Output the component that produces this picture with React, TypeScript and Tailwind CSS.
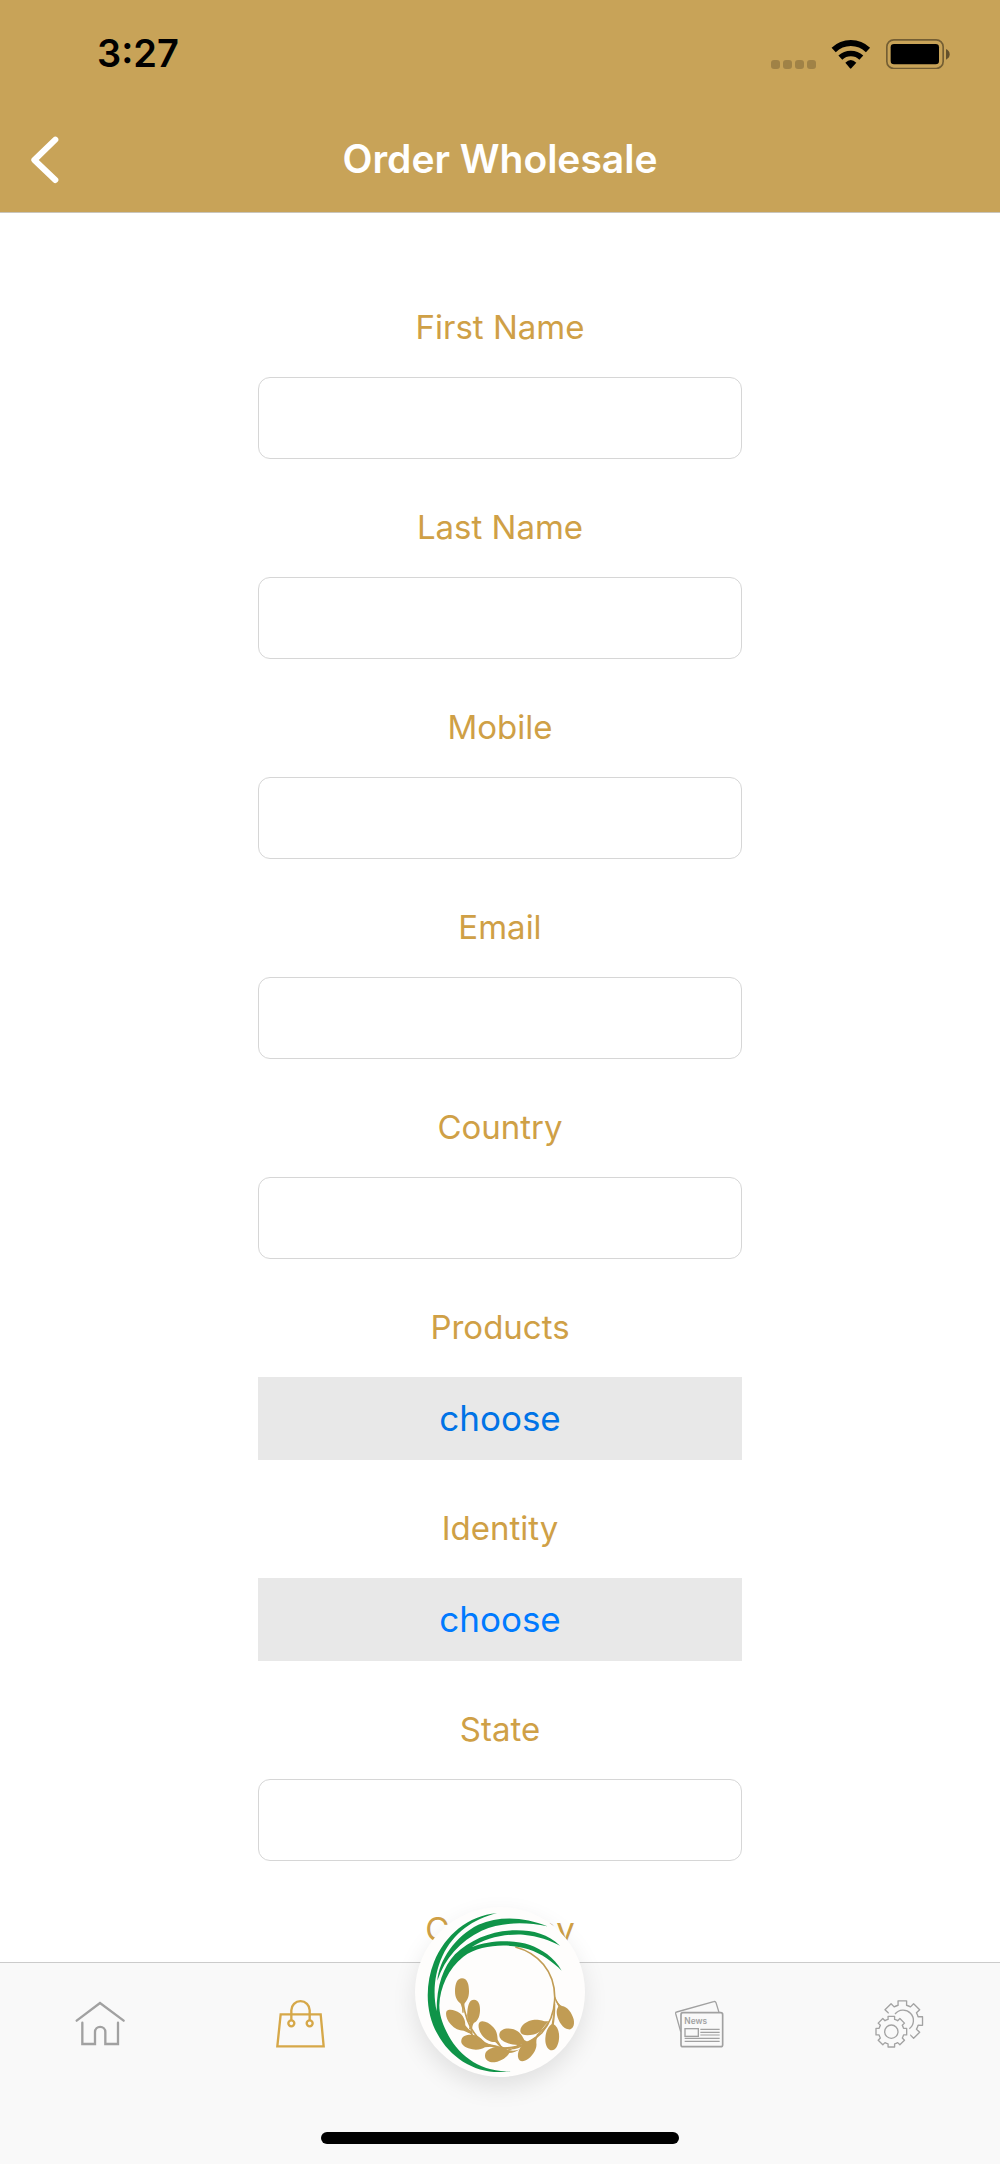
import React from 'react';

type Field = { id: string; label: string; kind: 'text' | 'choose'; type?: string };

const FIELDS: Field[] = [
    { id: 'first-name', label: 'First Name', kind: 'text' },
    { id: 'last-name', label: 'Last Name', kind: 'text' },
    { id: 'mobile', label: 'Mobile', kind: 'text', type: 'tel' },
    { id: 'email', label: 'Email', kind: 'text', type: 'email' },
    { id: 'country', label: 'Country', kind: 'text' },
    { id: 'products', label: 'Products', kind: 'choose' },
    { id: 'identity', label: 'Identity', kind: 'choose' },
    { id: 'state', label: 'State', kind: 'text' },
    { id: 'company', label: 'Company', kind: 'text' },
];

const polar = (cx: number, cy: number, r: number, deg: number) => {
    const a = (deg * Math.PI) / 180;
    return `${(cx + r * Math.cos(a)).toFixed(1)} ${(cy + r * Math.sin(a)).toFixed(1)}`;
};

// Teeth joined by arcs along the root circle
const gearPath = (cx: number, cy: number, outer: number, root: number, teeth: number[], from?: number, to?: number) => {
    let d = from === undefined ? '' : `M${polar(cx, cy, root, from)}`;
    teeth.forEach((t) => {
        d += d === '' ? `M${polar(cx, cy, root, t - 15)}` : `A${root} ${root} 0 0 1 ${polar(cx, cy, root, t - 15)}`;
        d += `L${polar(cx, cy, outer, t - 12)}L${polar(cx, cy, outer, t + 12)}L${polar(cx, cy, root, t + 15)}`;
    });
    return to === undefined ? `${d}A${root} ${root} 0 0 1 ${polar(cx, cy, root, teeth[0] - 15)}Z` : `${d}A${root} ${root} 0 0 1 ${polar(cx, cy, root, to)}`;
};

const HomeIcon = () => (
    <svg viewBox="0 0 150 150" className="size-[50px]" fill="none" stroke="#a1a1a1" strokeWidth="7" strokeLinecap="round">
        <path d="M5 65 75 12l71 53" />
        <path d="M22 71v64h38V99a15.500 15.500 0 0 1 31 0v36h38V71" />
    </svg>
);

const BagIcon = () => (
    <svg viewBox="0 0 150 150" className="size-[50px]" fill="none" stroke="#d6a849" strokeWidth="7">
        <path d="M17 46h120l9 96H7z" />
        <path d="M49 63V34a27.500 27.500 0 0 1 55 0v29" />
        <circle cx="49" cy="73" r="9" />
        <circle cx="104" cy="73" r="9" />
    </svg>
);

const NewsIcon = () => (
    <svg viewBox="0 0 150 150" className="size-[50px]" fill="none" stroke="#a1a1a1" strokeWidth="4">
        <path d="M17 98 2 44q-1-4 3-5L116 8q5-2 7 3l9 29" />
        <rect x="18" y="41" width="125" height="102" rx="6" strokeWidth="5" />
        <rect x="30" y="89" width="40" height="23" />
        <path d="M76 91h58M76 100h58M76 108h58M29 118h105M29 127h105" strokeWidth="3.500" />
        <text x="28" y="75" fontSize="25" fontWeight="600" fontFamily="Inter, sans-serif" fill="#a1a1a1" stroke="none">
            News
        </text>
    </svg>
);

const GearsIcon = () => (
    <svg viewBox="0 0 150 150" className="size-[50px]" fill="none" stroke="#a3a3a3" strokeWidth="4" strokeLinejoin="round">
        <path d={gearPath(49, 98, 47, 38, [-90, -45, 0, 45, 90, 135, 180, 225])} />
        <circle cx="49" cy="98" r="20" />
        <path d={gearPath(82, 66, 62, 49, [-135, -90, -45, 0, 45], -152, 61)} />
        <path d="M60 45A31 31 0 1 1 103 89" />
    </svg>
);

const WreathLogo = () => (
    <svg viewBox="45 80 510 510" className="size-full">
        <g fill="none" stroke="#c19c54" strokeWidth="4">
            <path d="M346 200C410 217 468 270 464 360C462 400 450 430 425 458C385 498 315 515 265 493C230 478 200 440 188 362" strokeWidth="5" />
            <path d="M464 350Q472 372 484 384M464 370Q464 410 458 440M445 428Q430 448 410 466M220 425Q208 450 218 468M190 440Q205 445 220 468M288 478Q292 495 312 504M240 492Q275 494 310 503Q345 512 375 490M365 483Q355 500 325 510" />
        </g>
        <g fill="#0f9448">
            <path d="M291 99C205 105 135 165 102 245C74 315 77 400 112 460C155 540 240 588 332 572C240 578 170 520 140 455C125 425 118 400 118 375C120 320 145 265 190 229C245 190 330 189 385 207C425 220 458 245 485 271C462 230 425 207 390 194C345 178 270 178 215 201C255 172 320 160 370 163C415 167 450 180 480 196C445 162 400 150 350 150C280 150 215 175 165 222C130 260 110 315 110 392C98 340 103 280 127 228C160 158 220 115 291 99Z" />
            <path d="M112 301C117 240 165 168 235 133C300 105 375 110 442 138C375 124 305 125 245 151C180 183 135 232 112 301Z" />
        </g>
        <g fill="#c19c54">
            <path d="M186 294C202 294 207 312 207 333C207 355 199 362 193 371Q190 385 191 397H187Q187 380 182 370C172 362 165 352 165 333C165 310 172 294 186 294Z" />
            <path d="M222 358C236 358 241 374 240 392C239 412 231 424 220 429Q213 438 211 448L207 446Q211 437 209 428C202 420 200 409 202 393C204 372 209 358 222 358Z" />
            <path d="M140 392C146 385 165 387 180 399C194 411 196 425 196 435Q204 448 218 456L216 464Q203 455 191 451C178 451 164 446 152 432C140 418 135 400 140 392Z" />
            <path d="M184 480C186 465 207 461 225 465C241 469 250 481 256 489Q274 493 295 497V501Q273 498 255 501C243 508 225 511 205 504C190 499 182 490 184 480Z" />
            <path d="M239 426C246 418 266 425 280 441C292 454 292 467 293 478Q299 489 306 500L301 499Q292 488 285 485C273 486 256 478 245 463C235 449 233 433 239 426Z" />
            <path d="M255 526C255 510 273 501 293 500C311 498 317 506 328 510Q345 513 360 507Q343 518 328 518C321 530 306 542 284 546C266 547 255 538 255 526Z" />
            <path d="M298 462C300 447 319 441 341 447C359 453 367 467 373 479Q381 485 389 486L374 490C361 496 340 495 322 488C306 482 297 473 298 462Z" />
            <path d="M355 534C350 517 361 496 377 485Q396 479 422 456Q408 470 409 487C412 503 401 523 385 535C373 544 359 546 355 534Z" />
            <path d="M361 450C362 434 380 421 403 418C423 417 430 424 447 423Q435 434 427 445C420 458 400 465 382 465C369 465 360 460 361 450Z" />
            <path d="M459 430C473 437 479 455 477 476C475 496 466 510 456 510C443 510 435 493 436 474C437 452 445 439 455 431Q460 405 462 378Q463 410 459 430Z" />
            <path d="M467 355Q475 371 486 377C503 379 515 397 521 417C525 437 517 449 505 447C489 445 475 423 471 404C468 388 474 382 475 378Q469 369 467 355Z" />
        </g>
    </svg>
);

const StatusBar = () => (
    <div className="flex h-[107px] items-center justify-between pr-[50px] pl-[97px]">
        <span className="text-[38px] font-semibold text-black">3:27</span>
        <div className="flex items-center">
            <div className="flex gap-[3px] pt-[22px]">
                {[0, 1, 2, 3].map((i) => (
                    <span key={i} className="size-[9px] rounded-[3px] bg-black/20" />
                ))}
            </div>
            <svg viewBox="990 117 120 90" className="ml-[15px] h-[30px] w-[40px]">
                <g fill="none" stroke="#000">
                    <path d="M998 150A74 74 0 0 1 1101 150" strokeWidth="18" />
                    <path d="M1018 173A46 46 0 0 1 1081 173" strokeWidth="17" />
                </g>
                <path d="M1033 188Q1049 172 1066 188L1051 205Q1049 207 1047 205Z" />
            </svg>
            <svg viewBox="1155 117 192 90" className="ml-[15px] h-[30px] w-[64px]">
                <rect x="1157.500" y="119.500" width="169" height="86" rx="21" fill="none" stroke="#000" strokeOpacity=".42" strokeWidth="5" />
                <rect x="1169" y="132" width="145" height="61" rx="10" />
                <path d="M1335 147Q1346 152 1346 163T1335 179Z" fillOpacity=".5" />
            </svg>
        </div>
    </div>
);

const FormField: React.FC<{ field: Field }> = ({ field }) => (
    <div className="flex w-full flex-col items-center gap-[30px]">
        <label htmlFor={field.id} className="text-[33px] leading-10 text-[#cfa046]">
            {field.label}
        </label>
        {field.kind === 'text' ? (
            <input
                id={field.id}
                type={field.type ?? 'text'}
                className="h-[82px] w-full rounded-xl border border-[#d6d6d6] bg-white px-4 text-[33px] outline-none"
            />
        ) : (
            <button
                id={field.id}
                type="button"
                className={`h-[83px] w-full bg-[#e8e8e8] text-[35px] ${field.id === 'products' ? 'text-[#0073e6]' : 'text-[#007aff]'}`}
            >
                choose
            </button>
        )}
    </div>
);

const App: React.FC = () => {
    return (
        <div className="flex h-screen flex-col bg-white font-[Inter,sans-serif]">
            <header className="border-b border-[#c9c5bb] bg-[#c8a358]">
                <StatusBar />
                <div className="grid h-[105px] grid-cols-[1fr_auto_1fr] items-center px-[31px]">
                    <button type="button" aria-label="Back" className="justify-self-start">
                        <svg viewBox="92 406 84 144" className="h-[48px] w-[28px]" fill="none" stroke="#fff" strokeWidth="18" strokeLinecap="round" strokeLinejoin="round">
                            <path d="M165 417 102 478 165 538" />
                        </svg>
                    </button>
                    <h1 className="text-[39px] font-semibold text-white">Order Wholesale</h1>
                </div>
            </header>

            <main className="min-h-0 flex-1 overflow-y-auto [scrollbar-width:none]">
                <form className="mx-auto flex w-[48.4%] flex-col gap-12 pt-[94px] pb-28">
                    {FIELDS.map((field) => (
                        <FormField key={field.id} field={field} />
                    ))}
                </form>
            </main>

            <footer className="relative border-t border-[#cbcbcb] bg-[#f9f9f9] pb-5">
                <nav className="grid h-[169px] grid-cols-5 justify-items-center pt-9">
                    <a href="#home" aria-label="Home" className="h-[50px]">
                        <HomeIcon />
                    </a>
                    <a href="#shop" aria-label="Shop" aria-current="page" className="h-[50px]">
                        <BagIcon />
                    </a>
                    {/* Raised centre button, overlaps the form above */}
                    <a
                        href="#main"
                        aria-label="Main"
                        className="absolute -top-14 left-1/2 size-[170px] -translate-x-1/2 rounded-full bg-[#fefdfc] shadow-[0_10px_24px_rgba(0,0,0,0.1)]"
                    >
                        <WreathLogo />
                    </a>
                    <a href="#news" aria-label="News" className="col-start-4 h-[50px]">
                        <NewsIcon />
                    </a>
                    <a href="#settings" aria-label="Settings" className="h-[50px]">
                        <GearsIcon />
                    </a>
                </nav>
                <div className="mx-auto h-3 w-[358px] rounded-full bg-black" />
            </footer>
        </div>
    );
};

export default App;
